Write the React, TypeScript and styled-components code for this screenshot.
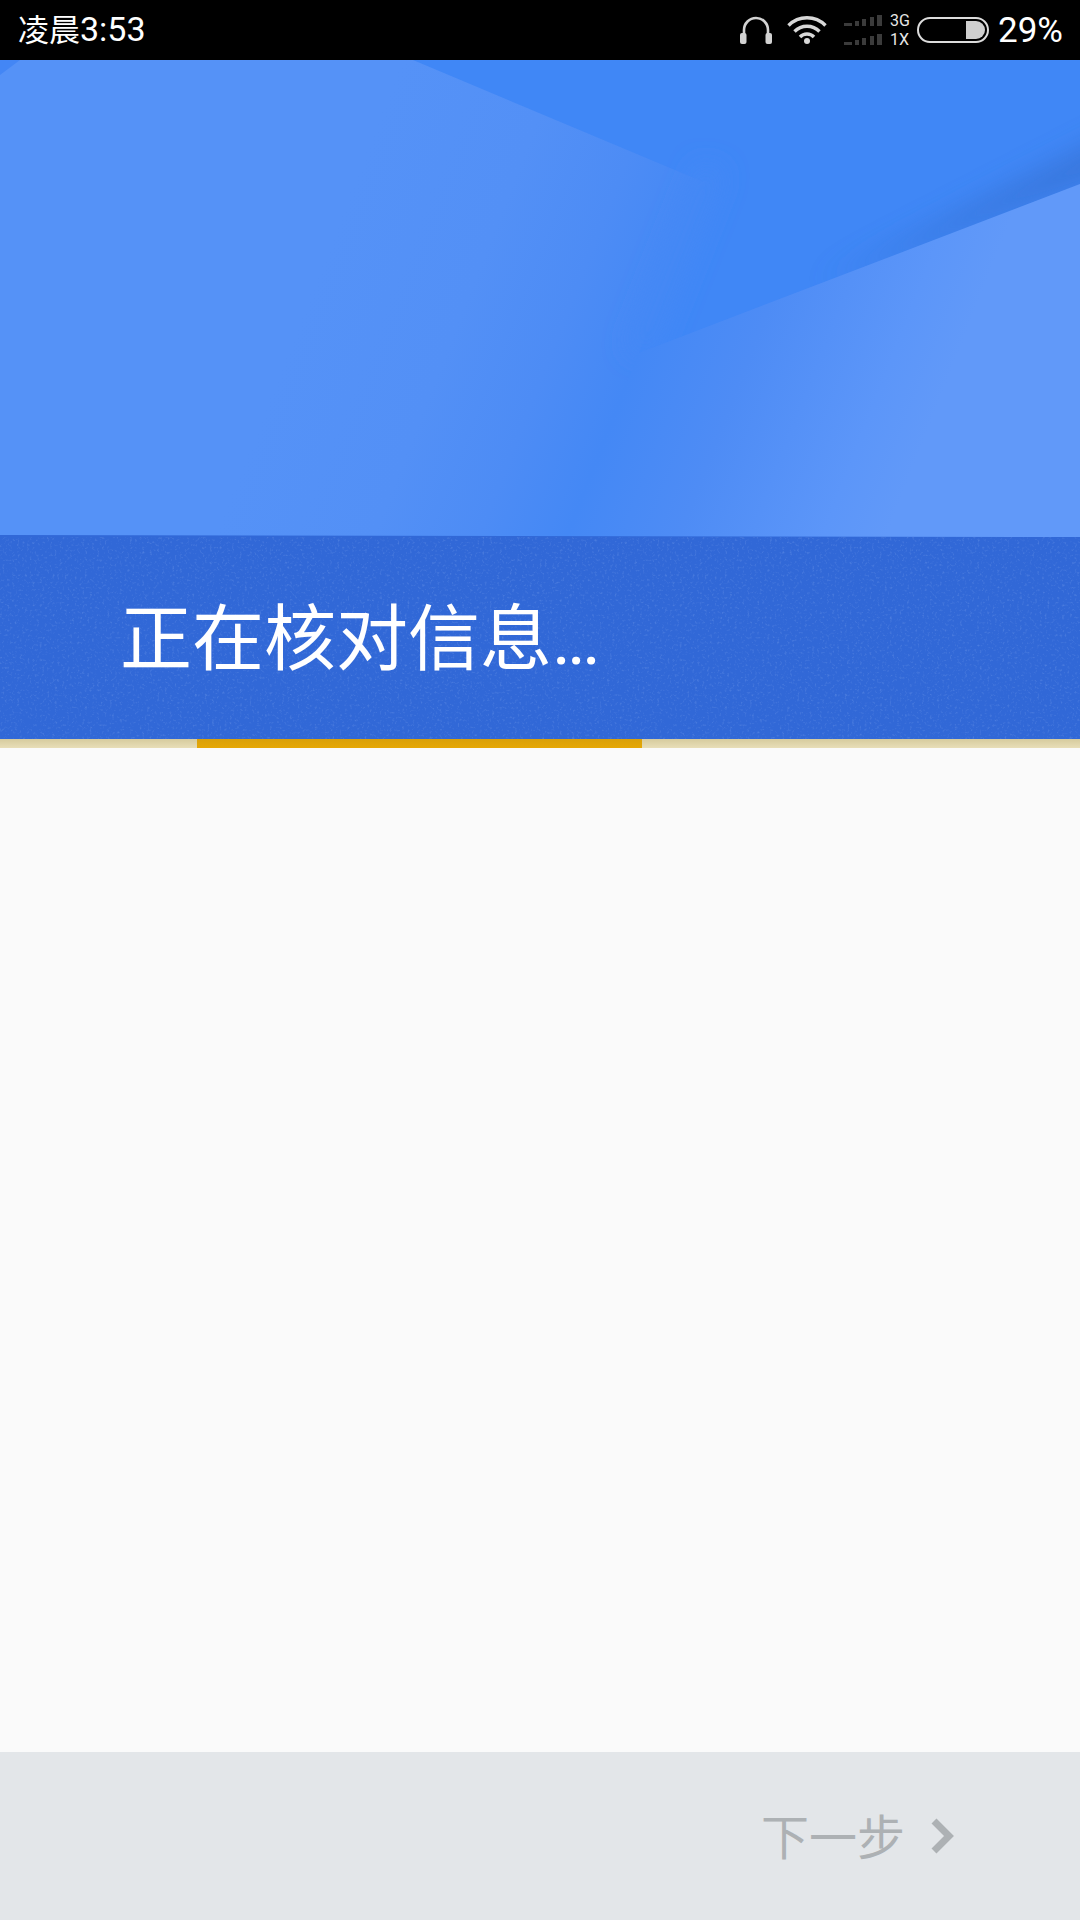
import styled, { createGlobalStyle } from "styled-components";

const GlobalStyle = createGlobalStyle`
  html, body {
    margin: 0;
    padding: 0;
    background: #fafafa;
  }
  #root {
    width: 1080px;
    height: 1920px;
  }
`;

const FONT = `Roboto, "Noto Sans CJK SC", sans-serif`;
const SIGNAL_BARS = [
  { x: 0, w: 8, h: 3 },
  { x: 11, w: 4, h: 5 },
  { x: 18, w: 4, h: 7 },
  { x: 26, w: 4, h: 9 },
  { x: 33, w: 5, h: 11 },
];

function Headphones() {
  return (
    <svg width="32" height="28" viewBox="0 0 32 28">
      <path d="M4 20V14a12 12 0 0 1 24 0v6" fill="none" stroke="#d2d2d2" strokeWidth="2.6" />
      <rect x="0" y="17" width="6.5" height="11" rx="2" fill="#d2d2d2" />
      <rect x="25.5" y="17" width="6.5" height="11" rx="2" fill="#d2d2d2" />
    </svg>
  );
}

function WifiIcon() {
  return (
    <svg width="40" height="28" viewBox="0 0 40 28">
      <g fill="none" stroke="#d8d8d8" strokeWidth="3.4">
        <path d="M1.5 9.5a26 26 0 0 1 37 0" />
        <path d="M7.5 15.5a17.5 17.5 0 0 1 25 0" />
        <path d="M13 21a9.6 9.6 0 0 1 14 0" />
      </g>
      <circle cx="20" cy="25" r="3" fill="#d8d8d8" />
    </svg>
  );
}

function SignalRow() {
  return (
    <svg width="38" height="11" viewBox="0 0 38 11">
      {SIGNAL_BARS.map((bar) => (
        <rect key={bar.x} x={bar.x} y={11 - bar.h} width={bar.w} height={bar.h} fill="#3b3b3b" />
      ))}
    </svg>
  );
}

function Battery() {
  return (
    <svg width="72" height="26" viewBox="0 0 72 26">
      <rect x="1" y="1" width="70" height="24" rx="12" fill="none" stroke="#dcdcdc" strokeWidth="2" />
      <path d="M49 4h10a9 9 0 0 1 9 9v0a9 9 0 0 1-9 9H49z" fill="#cfcfcf" />
    </svg>
  );
}

function HeroArt() {
  return (
    <HeroSvg viewBox="0 0 1080 477" preserveAspectRatio="none">
      <defs>
        <linearGradient id="leftWash" gradientUnits="userSpaceOnUse" x1="335" y1="170" x2="640" y2="290">
          <stop offset="0" stopColor="#5592f7" />
          <stop offset="0.45" stopColor="#5390f6" />
          <stop offset="0.75" stopColor="#4d8cf5" />
          <stop offset="1" stopColor="#4488f5" />
        </linearGradient>
        <linearGradient id="rightWash" gradientUnits="userSpaceOnUse" x1="640" y1="290" x2="917" y2="399">
          <stop offset="0" stopColor="#4488f5" />
          <stop offset="0.35" stopColor="#4e8cf5" />
          <stop offset="0.8" stopColor="#5c96f9" />
          <stop offset="1" stopColor="#6199f9" />
        </linearGradient>
        <filter id="softEdge" x="-30%" y="-60%" width="160%" height="220%">
          <feGaussianBlur stdDeviation="14" />
        </filter>
        <filter id="softSeam" filterUnits="userSpaceOnUse" x="540" y="40" width="260" height="320">
          <feGaussianBlur stdDeviation="12" />
        </filter>
      </defs>
      <rect width="1080" height="477" fill="url(#leftWash)" />
      <polygon points="413,0 1080,0 1080,124 639,293 706,123" fill="#4087f6" />
      <line x1="712" y1="108" x2="639" y2="293" stroke="#4488f5" strokeWidth="26" filter="url(#softSeam)" />
      <polygon points="820,224 1120,109 1120,70" fill="#3570d2" opacity="0.75" filter="url(#softEdge)" />
      <polygon points="1080,124 639,293 566,477 1080,477" fill="url(#rightWash)" />
      <polygon points="0,0 20,0 0,15" fill="#4386f5" />
      <polygon points="0,475 1080,477 0,477" fill="#3168d7" />
    </HeroSvg>
  );
}

export default function App() {
  return (
    <>
      <GlobalStyle />
      <Screen>
        <StatusBar>
          <Clock>
            <ClockHan>凌晨</ClockHan>3:53
          </Clock>
          <StatusIcons>
            <Headphones />
            <WifiIcon />
            <Signal>
              <SignalRow />
              <SignalRow />
            </Signal>
            <Network>
              <span>3G</span>
              <span>1X</span>
            </Network>
            <Battery />
            <Percent>29%</Percent>
          </StatusIcons>
        </StatusBar>
        <Hero>
          <HeroArt />
        </Hero>
        <Band>
          <Grain aria-hidden="true">
            <filter id="grain">
              <feTurbulence type="fractalNoise" baseFrequency="0.4" numOctaves="2" seed="4" />
              <feColorMatrix values="0 0 0 0 0.55  0 0 0 0 0.7  0 0 0 0 1  0 0 0 2 -1.1" />
            </filter>
            <rect width="100%" height="100%" filter="url(#grain)" />
          </Grain>
          <Title>
            正在核对信息<Dots>...</Dots>
          </Title>
        </Band>
        <ProgressTrack>
          <ProgressBar />
        </ProgressTrack>
        <Content />
        <Footer>
          <NextButton>
            <NextLabel>下一步</NextLabel>
            <svg width="24" height="36" viewBox="0 0 24 36">
              <path d="M3 3l15 15L3 33" fill="none" stroke="#adb1b4" strokeWidth="7" />
            </svg>
          </NextButton>
        </Footer>
      </Screen>
    </>
  );
}

const Screen = styled.div`
  width: 1080px;
  height: 1920px;
  display: flex;
  flex-direction: column;
  overflow: hidden;
  background: #fafafa;
  font-family: ${FONT};
`;

const StatusBar = styled.header`
  height: 60px;
  flex: none;
  background: #000;
  color: #fff;
  display: flex;
  align-items: center;
  justify-content: space-between;
  padding: 0 17px 0 18px;
`;

const Clock = styled.span`
  font-size: 34px;
  line-height: 60px;
`;

const ClockHan = styled.span`
  font-size: 31px;
`;

const StatusIcons = styled.div`
  display: flex;
  align-items: center;
  gap: 17px;

  & > svg:first-child {
    margin-right: -2px;
  }
`;

const Signal = styled.div`
  display: flex;
  flex-direction: column;
  gap: 8px;
  margin-right: -9px;
  svg {
    display: block;
  }
`;

const Network = styled.div`
  display: flex;
  flex-direction: column;
  gap: 1px;
  width: 22px;
  margin-right: -12px;
  font-size: 16px;
  line-height: 18px;
  color: #e6e6e6;
`;

const Percent = styled.span`
  font-size: 35px;
  margin-left: -8px;
`;

const Hero = styled.section`
  height: 477px;
  flex: none;
`;

const HeroSvg = styled.svg`
  display: block;
  width: 100%;
  height: 100%;
`;

const Band = styled.section`
  position: relative;
  height: 202px;
  flex: none;
  background: #3168d7;
  display: flex;
  align-items: center;
  padding: 4px 0 0 120px;
  box-sizing: border-box;
`;

const Grain = styled.svg`
  position: absolute;
  inset: 0;
  width: 100%;
  height: 100%;
  opacity: 0.25;
`;

const Title = styled.h1`
  position: relative;
  margin: 0;
  color: #fff;
  font-size: 72px;
  font-weight: 400;
  line-height: 1;
`;

const Dots = styled.span`
  letter-spacing: -4px;
`;

const ProgressTrack = styled.div`
  height: 9px;
  flex: none;
  background: linear-gradient(#d6cb9e, #e8deb8);
`;

const ProgressBar = styled.div`
  width: 445px;
  height: 100%;
  margin-left: 197px;
  background: linear-gradient(#d9a00a, #e6a806);
`;

const Content = styled.main`
  flex: 1;
  background: #fafafa;
`;

const Footer = styled.footer`
  height: 168px;
  flex: none;
  background: #e3e6e9;
  display: flex;
  align-items: center;
  justify-content: flex-end;
  padding-right: 125px;
`;

const NextButton = styled.div`
  display: flex;
  align-items: center;
  gap: 26px;
  color: #adb1b4;
  font-size: 48px;
`;

const NextLabel = styled.span`
  margin-top: -4px;
`;
